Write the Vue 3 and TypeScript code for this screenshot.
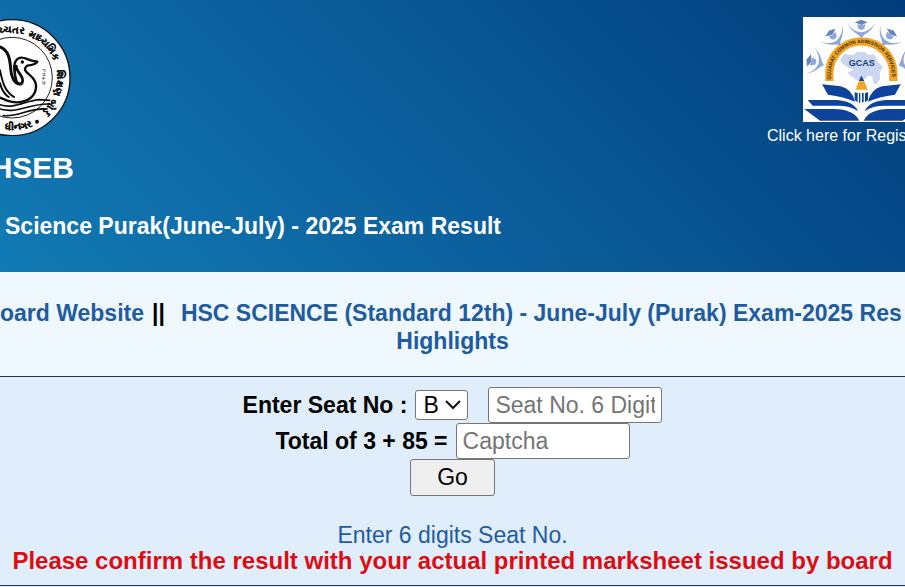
<script setup lang="ts">
import { ref } from 'vue'

interface SealWord {
  text: string
  offset: number
}

const sealWords: SealWord[] = [
  { text: 'ચ્ચતર', offset: 174 },
  { text: 'માધ્યમિક', offset: 262 },
  { text: 'શિક્ષણ', offset: 400 },
  { text: 'બોર્ડ', offset: 488 },
]
const seriesOptions: string[] = ['B', 'A', 'C', 'E', 'G', 'P', 'S']
const series = ref<string>('B')
const seatNo = ref<string>('')
const captcha = ref<string>('')
const firstNumber = 3
const secondNumber = 85
</script>

<template>
  <div class="page">
    <header class="banner">
      <div class="brand">
        <svg class="seal" viewBox="0 24 213 351" role="img" aria-label="Board seal">
          <circle cx="36" cy="200" r="174" fill="#fff" stroke="#10151b" stroke-width="4" />
          <circle cx="36" cy="200" r="121" fill="#fff" stroke="#222" stroke-width="3" />
          <path id="seal-ring" d="M-99 200 A135 135 0 0 1 171 200 A135 135 0 0 1 -99 200" fill="none" />
          <path id="seal-base" d="M-122 200 A158 158 0 0 0 194 200" fill="none" />
          <text v-for="word in sealWords" :key="word.text" class="seal-text"><textPath href="#seal-ring" :startOffset="word.offset">{{ word.text }}</textPath></text>
          <text class="seal-text" text-anchor="end"><textPath href="#seal-base" startOffset="312">ધીનગર</textPath></text>
          <circle cx="111" cy="332" r="6" fill="#111" />
          <g fill="none" stroke="#0c0c0c" stroke-linecap="round" stroke-linejoin="round">
            <path d="M43 168 C42 148 55 138 68 140 C79 141 84 149 112 152 C108 160 92 162 80 165 C70 174 76 182 87 190 C106 205 113 225 104 245 C92 272 52 280 22 269 L0 260" stroke-width="7" />
            <path d="M49 165 C48 182 69 192 68 209 C67 223 52 223 48 207 C43 192 44 178 43 166" stroke-width="8" />
            <path d="M0 108 C26 118 30 146 32 172 C34 198 43 218 58 218" stroke-width="9" />
            <path d="M0 178 C7 213 14 240 42 258 M0 216 C5 238 14 250 26 258" stroke-width="6" />
            <path d="M0 281 C40 296 80 268 118 266 L149 268 M0 294 C50 310 88 277 147 279 M10 314 C56 318 86 291 138 294" stroke-width="5" />
          </g>
          <circle cx="67" cy="153" r="5" />
          <g fill="none" stroke="#333" stroke-width="2">
            <path d="M127 176 h8 v7 M127 188 q10 -3 8 6 h-7 M126 202 h10 M130 198 v8 M126 213 h9 v6 h-8" />
          </g>
        </svg>
        <div class="brand-name">HSEB</div>
      </div>
      <h1 class="title">Science Purak(June-July) - 2025 Exam Result</h1>
      <a class="admission" href="#register">
        <svg class="gcas" viewBox="129 21 354 315" role="img" aria-label="GCAS">
          <rect x="129" y="21" width="354" height="315" fill="#fff" />
          <g id="graduate" fill="#8fa9d6">
            <path d="M262 40 Q280 66 303 67 Q326 66 347 40 Q332 65 315 73 L304 84 L292 73 Q274 63 262 40Z" />
            <path d="M284 37 L304 29 L323 37 L304 45Z" fill="#6685bd" />
            <path d="M292 43 Q304 48 315 43 Q317 58 304 60 Q291 58 292 43Z" />
          </g>
          <use href="#graduate" transform="rotate(-37 304 190)" />
          <use href="#graduate" transform="rotate(37 304 190)" />
          <use href="#graduate" transform="rotate(-72 304 202)" />
          <use href="#graduate" transform="rotate(72 304 202)" />
          <path d="M240 150 L252 132 L280 136 L291 125 L314 127 L326 135 L343 133 L352 155 L369 170 L359 188 L361 206 L349 223 L340 220 L337 199 L323 197 L315 207 L290 211 L270 196 L263 187 L282 179 L266 174 L248 162Z" fill="#cbd7ee" />
          <path d="M208 213 V190 A96 96 0 0 1 400 190 V213" fill="none" stroke="#f4a526" stroke-width="25" />
          <path id="arch-text" d="M213 213 V190 A91 91 0 0 1 395 190 V213" fill="none" />
          <text class="arch-label"><textPath href="#arch-text" startOffset="4">GUJARAT COMMON ADMISSION SERVICES</textPath></text>
          <text class="gcas-label" x="305" y="167" text-anchor="middle">GCAS</text>
          <path d="M296 213 L304 197 L313 213Z" fill="#17439a" />
          <path d="M296 214 H313 L323 239 H287Z" fill="#f6a428" />
          <g fill="#0d439a">
            <path d="M186 223 L242 229 Q276 237 285 275 Q253 260 204 254Z" />
            <path d="M422 223 L366 229 Q333 237 324 275 Q356 260 405 254Z" />
            <path d="M284 247 l9 2 v28 l-9 -7Z M297 249 h4 v29 h-4Z M306 249 h5 v28 h-5Z M315 249 l9 -2 v23 l-9 7Z" />
            <path d="M143 270 H226 Q279 272 294 303 Q268 286 230 287 H158Z" />
            <path d="M465 270 H382 Q329 272 314 303 Q340 286 378 287 H450Z" />
            <path d="M133 297 H220 Q279 296 298 332 H180Z" />
            <path d="M475 297 H388 Q329 296 311 332 H428Z" />
          </g>
        </svg>
        <span class="admission-label">Click here for Registration</span>
      </a>
    </header>

    <nav class="links">
      <div class="links-line">
        <a href="#board">oard Website</a>
        <span>||</span>
        <a class="exam-link" href="#highlights">HSC SCIENCE (Standard 12th) - June-July (Purak) Exam-2025 Res</a>
      </div>
      <a href="#highlights">Highlights</a>
    </nav>

    <main class="panel">
      <form class="form" @submit.prevent>
        <div class="row">
          <label for="series">Enter Seat No :</label>
          <span class="select-wrap">
            <select id="series" v-model="series">
              <option v-for="item in seriesOptions" :key="item" :value="item">{{ item }}</option>
            </select>
            <svg class="chevron" viewBox="0 0 18 12" aria-hidden="true"><path d="M2 2 L9 9 L16 2" /></svg>
          </span>
          <input v-model="seatNo" class="field seat" type="text" placeholder="Seat No. 6 Digits" aria-label="Seat number" />
        </div>
        <div class="row">
          <label for="captcha">Total of {{ firstNumber }} + {{ secondNumber }} =</label>
          <input id="captcha" v-model="captcha" class="field" type="text" placeholder="Captcha" />
        </div>
        <button class="go" type="submit">Go</button>
      </form>
      <p class="hint">Enter 6 digits Seat No.</p>
      <p class="warning">Please confirm the result with your actual printed marksheet issued by board</p>
    </main>
  </div>
</template>

<style>
body {
  margin: 0;
  background: #e0edfa;
}
</style>

<style scoped>
.page {
  overflow: hidden;
  font-family: "Liberation Sans", Arial, sans-serif;
  font-size: 23px;
  line-height: 28px;
  color: #000;
}
.banner {
  display: grid;
  grid-template-columns: 1fr 138px;
  padding: 17px 0 32px;
  overflow: hidden;
  color: #fff;
  background: linear-gradient(45deg, #127bb5 0%, #023c7c 100%);
}
.brand {
  display: flex;
  flex-direction: column;
  align-items: flex-end;
  gap: 15px;
  width: 74px;
  padding-top: 2px;
}
.seal {
  align-self: flex-start;
  width: 71px;
  height: 117px;
}
.seal-text {
  font-size: 29px;
  font-weight: 700;
  stroke: #111;
  stroke-width: 1px;
}
.brand-name {
  font-size: 30px;
  line-height: 34px;
  font-weight: 700;
}
.title {
  grid-row: 2;
  margin: 27px 0 0 5px;
  font-size: 23px;
  line-height: 28px;
  font-weight: 700;
  white-space: nowrap;
}
.admission {
  display: flex;
  flex-direction: column;
  align-items: center;
  gap: 4px;
  width: 190px;
  color: #fff;
  font-size: 16px;
  line-height: 20px;
  text-decoration: none;
}
.admission-label {
  align-self: flex-start;
}
.gcas {
  width: 118px;
  height: 105px;
}
.arch-label {
  font-size: 15px;
  font-weight: 700;
  fill: #3a2d14;
}
.gcas-label {
  font-size: 27px;
  font-weight: 700;
  fill: #143b87;
}
.links {
  padding: 27px 0 21px;
  overflow: hidden;
  border-bottom: 1px solid #1c3550;
  background: #eff7ff;
  font-weight: 700;
  text-align: center;
}
.links a {
  color: #1e5c9f;
  text-decoration: none;
}
.links-line {
  display: flex;
  gap: 8px;
  white-space: nowrap;
}
.links .exam-link {
  padding-left: 8px;
}
.panel {
  padding: 10px 0 11px;
  border-bottom: 1px solid #1c3550;
  background: #e0edfa;
  text-align: center;
}
.form {
  display: flex;
  flex-direction: column;
  align-items: center;
}
.row {
  display: flex;
  align-items: center;
  gap: 8px;
  font-weight: 700;
}
.select-wrap {
  display: grid;
  align-items: center;
}
select {
  grid-area: 1 / 1;
  box-sizing: border-box;
  width: 53px;
  height: 30px;
  padding: 0 0 0 7px;
  border: 1px solid #767676;
  border-radius: 3px;
  appearance: none;
  background: #fff;
  color: #000;
  font: 23px "Liberation Sans", Arial, sans-serif;
}
.chevron {
  grid-area: 1 / 1;
  justify-self: end;
  width: 18px;
  height: 12px;
  margin-right: 6px;
  fill: none;
  stroke: #111;
  stroke-width: 2;
  pointer-events: none;
}
.field {
  box-sizing: border-box;
  width: 174px;
  height: 36px;
  padding: 0 6px;
  border: 1px solid #767676;
  border-radius: 3px;
  background: #fff;
  font: 23px "Liberation Sans", Arial, sans-serif;
}
.field::placeholder {
  color: #757575;
}
.seat {
  margin-left: 12px;
}
.go {
  box-sizing: border-box;
  width: 85px;
  height: 37px;
  padding: 0;
  border: 1px solid #767676;
  border-radius: 3px;
  background: #efefef;
  color: #000;
  font: 23px "Liberation Sans", Arial, sans-serif;
}
.hint {
  margin: 26px 0 0;
  color: #1e5c9f;
  line-height: 26px;
}
.warning {
  margin: 0;
  color: #dc0d12;
  font-size: 24px;
  font-weight: 700;
  line-height: 26px;
  white-space: nowrap;
}
</style>
